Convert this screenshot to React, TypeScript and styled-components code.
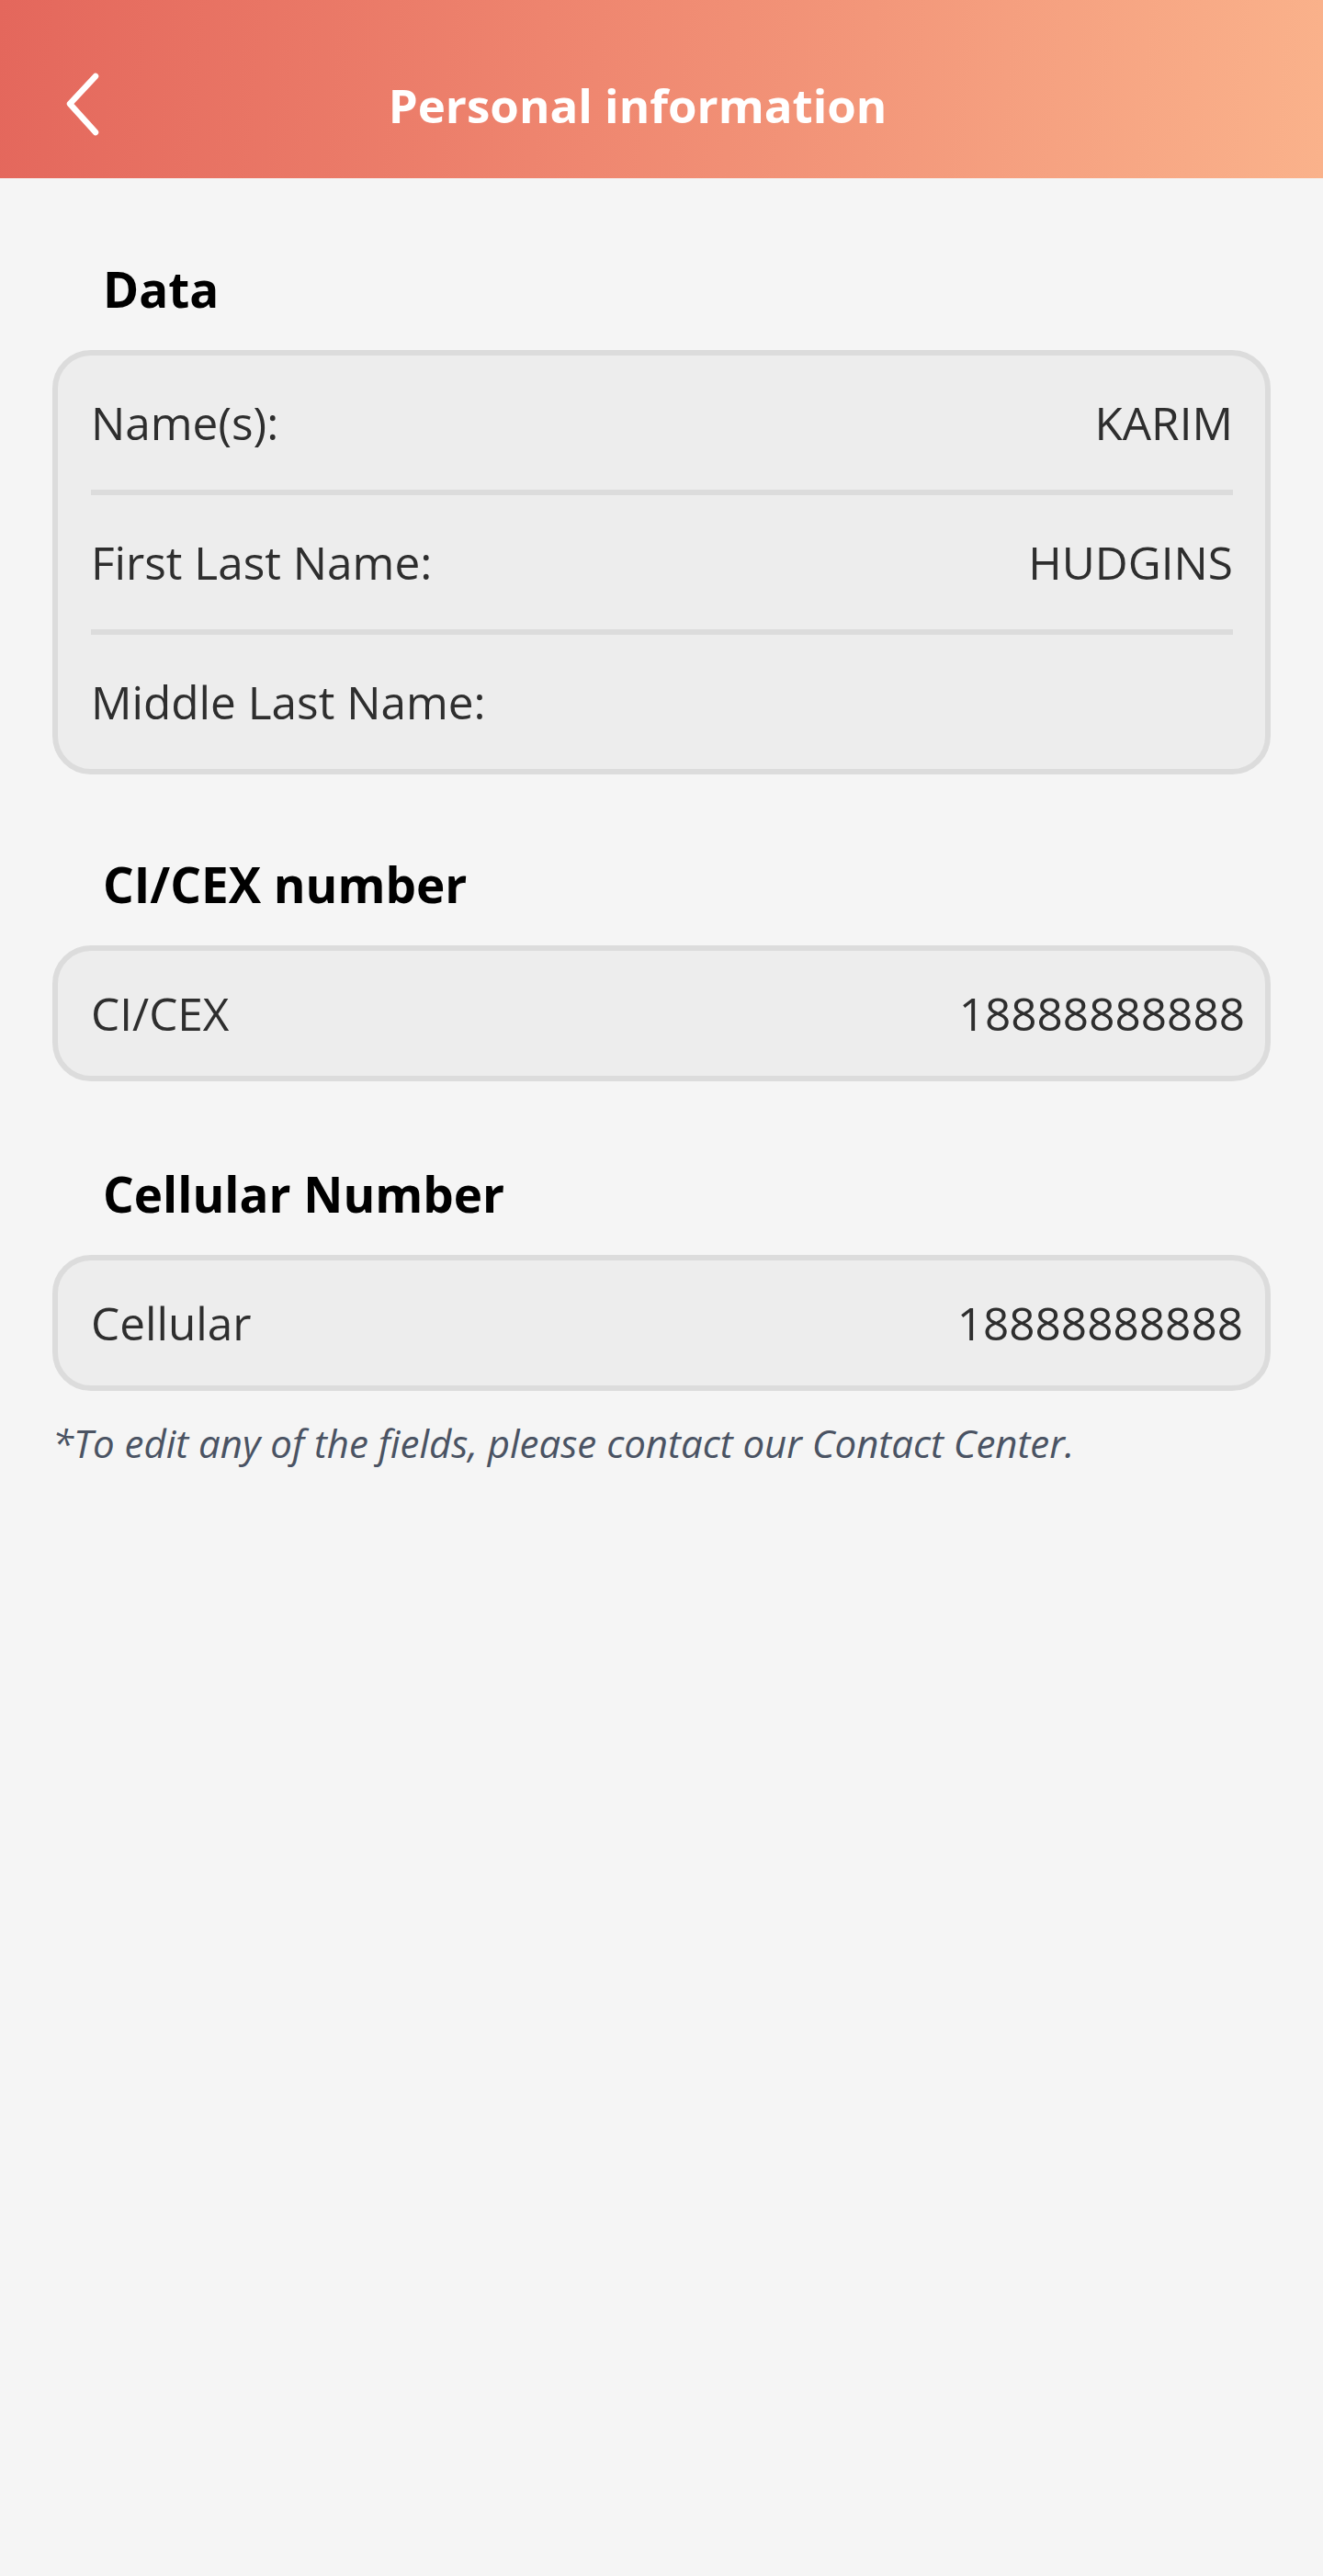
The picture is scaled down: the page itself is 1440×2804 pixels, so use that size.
import { createGlobalStyle, styled } from "styled-components";

const GlobalStyle = createGlobalStyle`
  html, body {
    margin: 0;
    padding: 0;
    background-color: #f5f5f5;
  }
  body {
    font-family: "Open Sans", "Noto Sans", sans-serif;
  }
`;

const Page = styled.div`
  min-height: 2804px;
  background-color: #f5f5f5;
`;

const Header = styled.header`
  height: 194px;
  box-sizing: border-box;
  padding: 34px 0 0 72px;
  display: flex;
  align-items: center;
  background: linear-gradient(95deg, #e4675c 0%, #ef8770 45%, #fab28b 100%);
`;

const BackButton = styled.button`
  width: 38px;
  height: 70px;
  padding: 0;
  border: none;
  background: none;
  display: flex;
  align-items: center;
  justify-content: center;
  cursor: pointer;
`;

const Title = styled.h1`
  flex: 1;
  margin: 0;
  padding-right: 162px;
  text-align: center;
  color: #ffffff;
  font-size: 51px;
  font-weight: 700;
  line-height: 64px;
`;

const Content = styled.main`
  padding: 89px 57px 0;
  display: flex;
  flex-direction: column;
`;

const Section = styled.section<{ $gap: number }>`
  display: flex;
  flex-direction: column;
  margin-bottom: ${(p) => p.$gap}px;
`;

const Heading = styled.h2`
  margin: 0 0 34px 55px;
  color: #000000;
  font-size: 53px;
  font-weight: 700;
  line-height: 64px;
`;

const Card = styled.div<{ $right: number }>`
  border: 6px solid #dcdcdc;
  border-radius: 42px;
  background-color: #ededed;
  padding: 0 ${(p) => p.$right}px 0 36px;
  display: flex;
  flex-direction: column;
`;

const Row = styled.div<{ $height: number }>`
  height: ${(p) => p.$height}px;
  display: flex;
  align-items: center;
  justify-content: space-between;
  color: #2e2e2e;
  font-size: 49.5px;
  line-height: 58px;
`;

const Divider = styled.div`
  height: 6px;
  background-color: #dcdcdc;
`;

const Note = styled.p`
  margin: 0;
  color: #4a5363;
  font-size: 42px;
  font-style: italic;
  line-height: 48px;
`;

const nameRows = [
  { label: "Name(s):", value: "KARIM" },
  { label: "First Last Name:", value: "HUDGINS" },
  { label: "Middle Last Name:", value: "" },
];

function ChevronLeft() {
  return (
    <svg width="38" height="70" viewBox="0 0 38 70" fill="none">
      <path
        d="M32 4 L4 34 L32 65"
        stroke="#ffffff"
        strokeWidth="6.5"
        strokeLinecap="round"
        strokeLinejoin="round"
      />
    </svg>
  );
}

export default function App() {
  return (
    <Page>
      <GlobalStyle />
      <Header>
        <BackButton aria-label="Back">
          <ChevronLeft />
        </BackButton>
        <Title>Personal information</Title>
      </Header>
      <Content>
        <Section $gap={88}>
          <Heading>Data</Heading>
          <Card $right={35}>
            {nameRows.map((row, i) => (
              <div key={row.label}>
                {i > 0 && <Divider />}
                <Row $height={146}>
                  <span>{row.label}</span>
                  <span>{row.value}</span>
                </Row>
              </div>
            ))}
          </Card>
        </Section>
        <Section $gap={91}>
          <Heading>CI/CEX number</Heading>
          <Card $right={22}>
            <Row $height={136}>
              <span>CI/CEX</span>
              <span>18888888888</span>
            </Row>
          </Card>
        </Section>
        <Section $gap={33}>
          <Heading>Cellular Number</Heading>
          <Card $right={24}>
            <Row $height={136}>
              <span>Cellular</span>
              <span>18888888888</span>
            </Row>
          </Card>
        </Section>
        <Note>*To edit any of the fields, please contact our Contact Center.</Note>
      </Content>
    </Page>
  );
}
